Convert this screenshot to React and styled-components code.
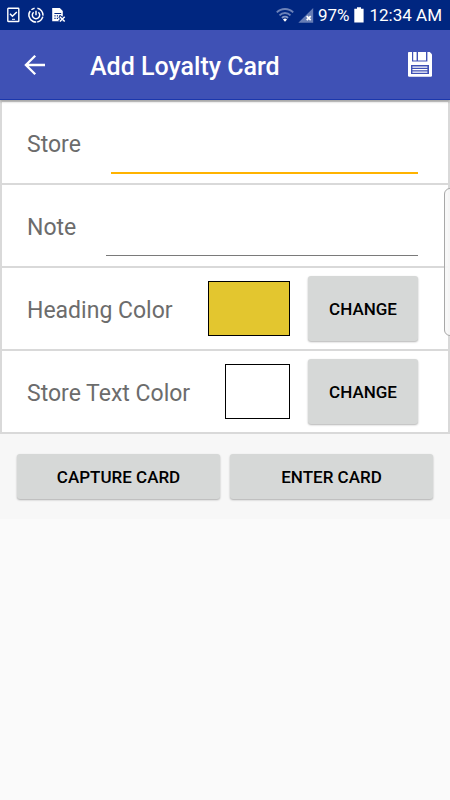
// App.jsx
import { useState } from "react";
import styled, { createGlobalStyle } from "styled-components";

const GlobalStyle = createGlobalStyle`
  * {
    box-sizing: border-box;
  }
  body {
    margin: 0;
    background-color: #fafafa;
    font-family: Roboto, "Noto Sans", sans-serif;
  }
`

const Page = styled.div`
  position: relative;
  min-height: 100vh;
  overflow: hidden;
`

const StatusBar = styled.div`
  height: 30px;
  padding: 0 8px 0 7px;
  display: flex;
  justify-content: space-between;
  align-items: center;
  background-color: #002680;
  color: white;
  font-size: 17px;
`

const StatusGroup = styled.div`
  display: flex;
  align-items: center;
  gap: ${(props) => props.$gap}px;
  svg {
    display: block;
  }
`

const Clock = styled.span`
  margin-left: 2px;
`

const AppBar = styled.header`
  position: relative;
  z-index: 1;
  height: 70px;
  padding: 0 15px 0 20px;
  display: flex;
  align-items: center;
  background-color: #3f51b5;
  border-bottom: 1px solid #1b37ac;
  box-shadow: 0 2px 2px rgba(0, 0, 0, 0.22);
`

const Title = styled.h1`
  flex-grow: 1;
  margin: 0 0 0 40px;
  padding-top: 4px;
  color: white;
  font-size: 25px;
  font-weight: 500;
`

const IconButton = styled.button`
  width: 30px;
  height: 30px;
  padding: 0;
  display: flex;
  justify-content: center;
  align-items: center;
  border: none;
  background: none;
  cursor: pointer;
`

const Form = styled.div`
  border: 2px solid #d9d9d9;
  background-color: white;
`

const Row = styled.div`
  height: 83px;
  padding: 0 30px 0 25px;
  display: flex;
  align-items: center;
  border-bottom: 2px solid #d9d9d9;
  &:last-child {
    height: 81px;
    border-bottom: none;
  }
`

const Label = styled.label`
  padding-top: 4px;
  color: #6c6c6c;
  font-size: 23px;
  line-height: 30px;
  white-space: nowrap;
`

const TextInput = styled.input`
  flex-grow: 1;
  min-width: 0;
  align-self: flex-end;
  height: 56px;
  margin: 0 0 ${(props) => (props.$active ? 9 : 10)}px 30px;
  padding: 0;
  border: none;
  border-bottom: ${(props) => (props.$active ? "2px solid #ffb300" : "1px solid #7a7a7a")};
  outline: none;
  background: none;
  color: #212121;
  font-family: inherit;
  font-size: 23px;
`

const Swatch = styled.div`
  flex-grow: 1;
  height: 55px;
  margin: 0 18px 0 35px;
  border: 1px solid black;
  background-color: ${(props) => props.$color};
`

const Button = styled.button`
  padding: 0;
  border: none;
  border-radius: 3px;
  background-color: #d6d8d7;
  box-shadow: 0 1px 2px rgba(0, 0, 0, 0.3);
  color: black;
  font-family: inherit;
  font-size: 17px;
  font-weight: 500;
  cursor: pointer;
`

const ChangeButton = styled(Button)`
  width: 110px;
  height: 65px;
`

const Actions = styled.div`
  padding: 20px 17px;
  display: grid;
  grid-template-columns: 1fr 1fr;
  gap: 10px;
  background-color: #f7f7f7;
`

const ActionButton = styled(Button)`
  height: 45px;
`

// edge panel handle, sits over the form on the right side
const EdgeHandle = styled.div`
  position: absolute;
  top: 188px;
  right: -6px;
  width: 12px;
  height: 148px;
  border: 1px solid #a8a8a8;
  border-radius: 6px;
  background-color: rgba(247, 247, 247, 0.9);
`

const TaskIcon = () => (
  <svg width="13" height="16" viewBox="0 0 13 16" fill="none" stroke="white">
    <rect x="0.8" y="1.3" width="11" height="13.2" rx="0.6" strokeWidth="1.4" />
    <path d="M3 6.8l2.4 2.5 4.4-4.3" strokeWidth="1.5" />
    <path d="M5 12.3h3" strokeWidth="1" />
  </svg>
)

const PowerIcon = () => (
  <svg width="16" height="16" viewBox="0 0 16 16" fill="none" stroke="white">
    <path d="M9.4 1.2A7 7 0 1 1 2.2 4" strokeWidth="1.5" strokeDasharray="10 1 8 1 30" />
    <path d="M3.4 2.8A7 7 0 0 1 6.6 1.2" strokeWidth="1.5" />
    <path d="M10.4 5.2a3.7 3.7 0 1 1-4.8 0" strokeWidth="1.5" />
    <path d="M8 3.8V8.2" strokeWidth="1.5" />
  </svg>
)

const SimIcon = () => (
  <svg width="14" height="16" viewBox="0 0 14 16">
    <path d="M0.2 1h7.6l3 3v10.2H0.2z" fill="white" />
    <path
      d="M2.4 6h6.8v1H2.4zM2.4 8.3h1.2v1.2H2.4zM4.8 8.3H6v1.2H4.8zM7.2 8.3h1.2v1.2H7.2zM2.4 10.8h1.2V12H2.4zM4.8 10.8H6V12H4.8z"
      fill="#002680"
    />
    <path d="M7.4 9.2l5.6 5.6M13 9.2l-5.6 5.6" stroke="#002680" strokeWidth="3.2" />
    <path d="M7.9 9.7l4.8 4.8M12.7 9.7l-4.8 4.8" stroke="white" strokeWidth="1.5" />
  </svg>
)

const WifiIcon = () => (
  <svg width="18" height="14" viewBox="0 0 18 14" fill="none" strokeWidth="1.9">
    <path d="M0.8 4.4a11.6 11.6 0 0 1 16.4 0" stroke="#6c82b8" />
    <path d="M3.5 7.3a7.8 7.8 0 0 1 11 0" stroke="#6c82b8" />
    <path d="M6 10a4.3 4.3 0 0 1 6 0" stroke="#8496c4" />
    <path d="M9 13.8l-2-2.2a2.8 2.8 0 0 1 4 0z" fill="white" />
  </svg>
)

const SignalIcon = () => (
  <svg width="16" height="15" viewBox="0 0 16 15">
    <path d="M15.2 0v14.8H0.3z" fill="#667db5" />
    <path d="M8.7 8.1l4 4M12.7 8.1l-4 4" stroke="white" strokeWidth="1.7" />
  </svg>
)

const BatteryIcon = () => (
  <svg width="10" height="16" viewBox="0 0 10 16">
    <path d="M3 0.3h4v1.5h2.6v13.7H0.3V1.8H3z" fill="white" />
  </svg>
)

const BackIcon = () => (
  <svg width="22" height="22" viewBox="0 0 22 22" fill="none" stroke="white" strokeWidth="2.3">
    <path d="M11.2 1.7L1.9 11l9.3 9.3M2 11h19" />
  </svg>
)

const SaveIcon = () => (
  <svg width="24" height="25" viewBox="0 0 24 25">
    <path
      d="M0.8 0h21l2.2 2.2V23.6Q24 24.8 22.8 24.8H1.2Q0 24.8 0 23.6V0.8Q0 0 0.8 0z"
      fill="white"
    />
    <path d="M4 0h1.2v8.4H18V0h1.4v9.6H4zM8.6 0H10v8.6H8.6zM3 13h18v9H3z" fill="#3f51b5" />
    <path d="M4.4 14.4h15v1.3h-15zM4.4 16.9h15v1.3h-15zM4.4 19.4h15v1.3h-15z" fill="white" />
  </svg>
)

const App = () => {
  const [store, setStore] = useState("");
  const [note, setNote] = useState("");

  return (
    <Page>
      <GlobalStyle />
      <StatusBar>
        <StatusGroup $gap={8}>
          <TaskIcon />
          <PowerIcon />
          <SimIcon />
        </StatusGroup>
        <StatusGroup $gap={4}>
          <WifiIcon />
          <SignalIcon />
          <span>97%</span>
          <BatteryIcon />
          <Clock>12:34 AM</Clock>
        </StatusGroup>
      </StatusBar>

      <AppBar>
        <IconButton aria-label="Back"><BackIcon /></IconButton>
        <Title>Add Loyalty Card</Title>
        <IconButton aria-label="Save"><SaveIcon /></IconButton>
      </AppBar>

      <Form>
        <Row>
          <Label htmlFor="store">Store</Label>
          <TextInput id="store" $active value={store} onChange={(e) => setStore(e.target.value)} />
        </Row>
        <Row>
          <Label htmlFor="note">Note</Label>
          <TextInput id="note" value={note} onChange={(e) => setNote(e.target.value)} />
        </Row>
        <Row>
          <Label htmlFor="heading-color">Heading Color</Label>
          <Swatch $color="#e3c62f" />
          <ChangeButton id="heading-color">CHANGE</ChangeButton>
        </Row>
        <Row>
          <Label htmlFor="text-color">Store Text Color</Label>
          <Swatch $color="white" />
          <ChangeButton id="text-color">CHANGE</ChangeButton>
        </Row>
      </Form>

      <Actions>
        <ActionButton>CAPTURE CARD</ActionButton>
        <ActionButton>ENTER CARD</ActionButton>
      </Actions>

      <EdgeHandle />
    </Page>
  )
};

export default App;
